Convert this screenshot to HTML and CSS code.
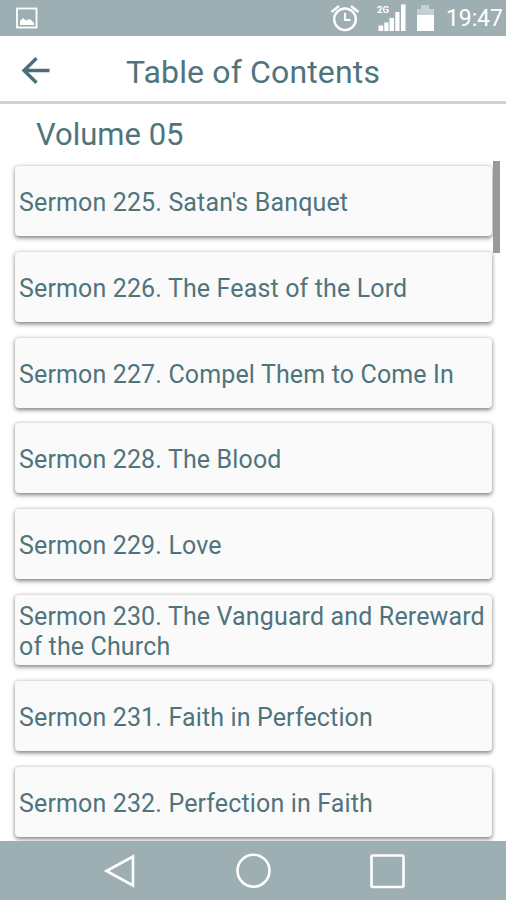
FILE: index.html
```
<!DOCTYPE html>
<html lang="en">
<head>
<meta charset="utf-8">
<title>Table of Contents</title>
<link rel="stylesheet" href="styles.css">
</head>
<body>
<div class="screen">
  <div class="status">
    <svg class="status-icons" width="506" height="36" viewBox="0 0 506 36" aria-hidden="true">
      <rect x="17" y="8.500" width="19.500" height="19" fill="none" stroke="#fff" stroke-width="1.800"/>
      <path d="M20 25v-4l3-3 3 2.500 3-1.500 2 1 3 3v2z" fill="#fff"/>
      <g fill="none" stroke="#fff" stroke-width="2.400">
        <circle cx="345" cy="19.300" r="10.800"/>
        <path d="M345 12.800v7.200h5.500" stroke-width="2.100"/>
        <path d="M331.500 12l7.500-6M351 6l7.500 6"/>
      </g>
      <path d="M378.500 25.500h4.700V31h-4.700zM384.300 22.500h4.200V31h-4.200zM389.500 18h4.500v13h-4.500zM395.300 12h4.200v19h-4.200zM401 4.500h4.500V31H401z" fill="#fff"/>
      <path d="M417 9h4V5h8v4h5v7h-17z" fill="#c5d0d3"/>
      <path d="M417 15h17v16h-17z" fill="#fff"/>
    </svg>
    <span class="network">2G</span>
    <span class="clock">19:47</span>
  </div>
  <header class="bar">
    <svg class="back" width="30" height="30" viewBox="0 0 30 30" aria-hidden="true"><path d="M29.500 15.500H4M16.500 3.200L4 15.500 16.500 27.800" fill="none" stroke="#49707a" stroke-width="3.400"/></svg>
    <h1 class="title">Table of Contents</h1>
  </header>
  <main class="content">
    <h2 class="volume">Volume 05</h2>
    <div class="list">
      <div class="card"><span>Sermon 225. Satan's Banquet</span></div>
      <div class="card"><span>Sermon 226. The Feast of the Lord</span></div>
      <div class="card"><span>Sermon 227. Compel Them to Come In</span></div>
      <div class="card"><span>Sermon 228. The Blood</span></div>
      <div class="card"><span>Sermon 229. Love</span></div>
      <div class="card"><span>Sermon 230. The Vanguard and Rereward of the Church</span></div>
      <div class="card"><span>Sermon 231. Faith in Perfection</span></div>
      <div class="card"><span>Sermon 232. Perfection in Faith</span></div>
      <div class="scrollbar"></div>
    </div>
  </main>
  <nav class="nav">
    <svg width="506" height="59" viewBox="0 0 506 59" fill="none" stroke="#fff" stroke-width="2.600" aria-hidden="true">
      <path d="M106.500 30L133 15.500v29z"/>
      <circle cx="253.500" cy="29.700" r="16"/>
      <rect x="371.500" y="14.500" width="32" height="31.500" rx="1"/>
    </svg>
  </nav>
</div>
</body>
</html>
```
FILE: styles.css
```
* { box-sizing: border-box; }
body { margin: 0; background: #fff; font-family: Roboto, sans-serif; color: #4f747c; }
.screen { width: 506px; height: 900px; display: flex; flex-direction: column; overflow: hidden; }
.status { position: relative; flex: none; height: 36px; background: #9dafb3; color: #fff; }
.status-icons { display: block; }
.network { position: absolute; left: 377px; top: 4px; font-size: 9.5px; line-height: 11px; font-weight: 700; }
.clock { position: absolute; left: 446px; top: 4px; font-size: 23px; line-height: 30px; letter-spacing: -0.1px; }
.bar { flex: none; height: 68px; display: flex; align-items: center; border-bottom: 3px solid #d1d1d1; padding: 2px 0 0 20px; }
.back { flex: none; }
.title { margin: 5px 0 0 76px; font-size: 32px; line-height: 38px; letter-spacing: 0.15px; font-weight: 400; white-space: nowrap; }
.content { flex: 1; min-height: 0; overflow: hidden; display: flex; flex-direction: column; }
.volume { flex: none; margin: 0; height: 57px; padding: 12px 0 0 36px; font-size: 31px; line-height: 38px; font-weight: 400; }
.list { position: relative; flex: 1; padding: 5px 14px 0 15px; display: flex; flex-direction: column; gap: 15.8px; }
.card { flex: none; height: 70px; display: flex; align-items: center; padding: 4px 0 0 4px; border-radius: 4px; background: #fafafa; box-shadow: 0 1.5px 4px rgba(0,0,0,.5); font-size: 25px; line-height: 30px; letter-spacing: 0.14px; }
.scrollbar { position: absolute; left: 493px; top: 0; width: 7px; height: 92px; background: #999; }
.nav { flex: none; height: 59px; background: #9dafb3; }
.nav svg { display: block; }
```
